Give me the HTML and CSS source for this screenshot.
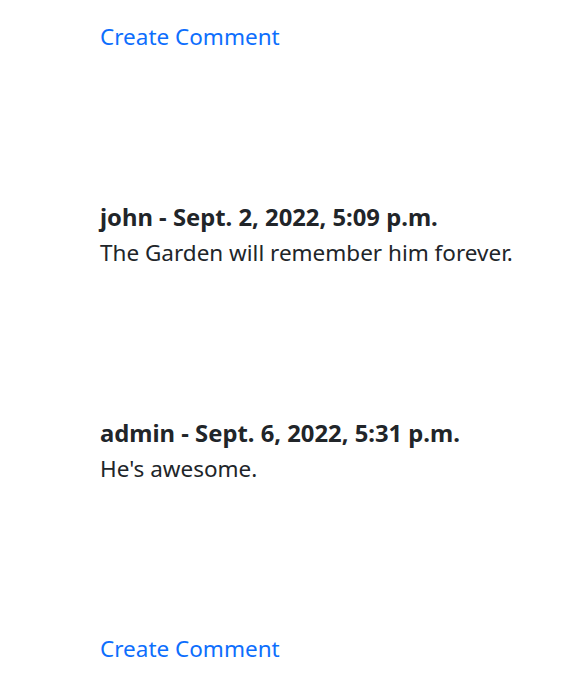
FILE: index.html
```html
<!DOCTYPE html>
<html lang="en">
<head>
<meta charset="utf-8">
<link rel="stylesheet" href="styles.css">
</head>
<body>
<main class="page">
  <a class="create-link" href="#">Create Comment</a>
  <section class="comment">
    <h5 class="comment-head">john - Sept. 2, 2022, 5:09 p.m.</h5>
    <p class="comment-body">The Garden will remember him forever.</p>
  </section>
  <section class="comment">
    <h5 class="comment-head">admin - Sept. 6, 2022, 5:31 p.m.</h5>
    <p class="comment-body">He's awesome.</p>
  </section>
  <a class="create-link bottom" href="#">Create Comment</a>
</main>
</body>
</html>
```
FILE: styles.css
```css
html, body {
  margin: 0;
  padding: 0;
  background: #fff;
}
body {
  font-family: "Noto Sans", "Open Sans", sans-serif;
  color: #212529;
}
.page {
  display: flex;
  flex-direction: column;
  align-items: flex-start;
  padding: 22px 0 0 100px;
}
.create-link {
  color: #0d6efd;
  text-decoration: none;
  font-size: 22.5px;
  line-height: 30px;
}
.create-link.bottom {
  margin-top: 150px;
}
.comment {
  margin-top: 153px;
}
.comment-head {
  margin: 0 0 9px;
  font-size: 23.8px;
  font-weight: 700;
  line-height: 24px;
}
.comment-body {
  margin: 0;
  font-size: 22.5px;
  line-height: 30px;
}
```
